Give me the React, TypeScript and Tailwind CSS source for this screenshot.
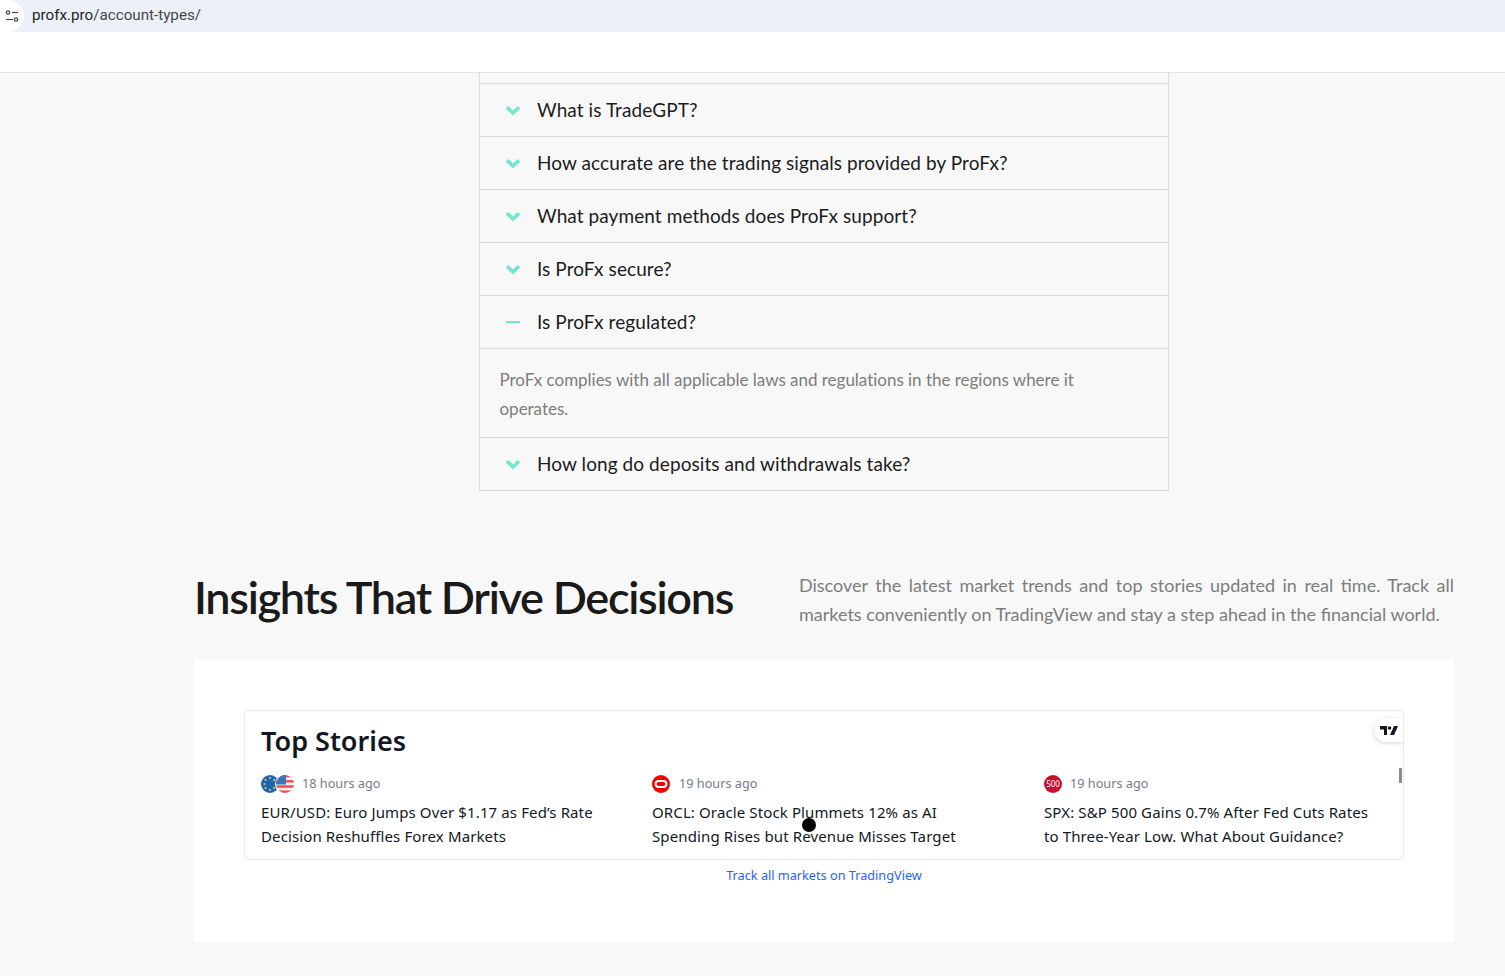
import React from "react";

const Chevron = () => (
  <svg width="16" height="11" viewBox="0 0 16 11" className="block">
    <path d="M2 2.2 L8 8 L14 2.2" fill="none" stroke="#6fe8cb" strokeWidth="3.6" />
  </svg>
);

const Row = ({ q, open }: { q: string; open?: boolean }) => (
  <div className="h-[53px] border-b border-[#d9dbe3] flex items-center pl-[25px]">
    <div className="w-[32px] flex items-center">
      {open ? <div className="w-[14px] h-[2px] bg-[#6fe8cb] ml-[1px]" /> : <Chevron />}
    </div>
    <span className="text-[19px] text-[#1c1c1c] tracking-[0.08px]">{q}</span>
  </div>
);

const Story = ({ icon, time, lines, gap, width }: { icon: React.ReactNode; time: string; lines: string[]; gap: string; width: string }) => (
  <div className={`${width} shrink-0`}>
    <div className="flex items-center h-[18px]">
      {icon}
      <span className={`${gap} text-[12.7px] text-[#787b86]`}>{time}</span>
    </div>
    <div className="mt-[7px] text-[15px] leading-[24px] text-[#131722] whitespace-nowrap tracking-[0.12px]">
      {lines.map((l) => (
        <div key={l}>{l}</div>
      ))}
    </div>
  </div>
);

const FlagIcons = () => (
  <svg width="34" height="18" viewBox="0 0 34 18">
    <circle cx="9" cy="9" r="9" fill="#1e64b4" />
    <g fill="#f2cf45">
      <circle cx="9" cy="3" r="1" />
      <circle cx="4.5" cy="5" r="1" />
      <circle cx="13" cy="5" r="1" />
      <circle cx="3.5" cy="9" r="1" />
      <circle cx="4.5" cy="13" r="1" />
      <circle cx="9" cy="15" r="1" />
      <circle cx="13" cy="13" r="1" />
    </g>
    <circle cx="24" cy="9" r="10" fill="#fff" />
    <clipPath id="us">
      <circle cx="24" cy="9" r="9" />
    </clipPath>
    <g clipPath="url(#us)">
      <rect x="15" y="0" width="18" height="18" fill="#f5f5f5" />
      <rect x="15" y="0" width="18" height="2.4" fill="#ef5350" />
      <rect x="15" y="5" width="18" height="2.6" fill="#ef5350" />
      <rect x="15" y="10.2" width="18" height="2.6" fill="#ef5350" />
      <rect x="15" y="15.4" width="18" height="2.6" fill="#ef5350" />
      <rect x="15" y="0" width="10" height="9.5" fill="#3d72c4" />
    </g>
  </svg>
);

const OracleIcon = () => (
  <svg width="18" height="18" viewBox="0 0 18 18">
    <circle cx="9" cy="9" r="9" fill="#f00000" />
    <rect x="3.6" y="6" width="10.8" height="6" rx="3" fill="none" stroke="#fff" strokeWidth="2" />
  </svg>
);

const SpxIcon = () => (
  <div className="w-[18px] h-[18px] rounded-full bg-[#c8102e] flex items-center justify-center text-white text-[8px] leading-none">
    500
  </div>
);

export default function App() {
  return (
    <div className="relative w-[1505px] h-[976px] overflow-hidden bg-[#f8f8f8] font-['Lato',sans-serif]">
      {/* browser address bar */}
      <div className="h-[32px] bg-[#ebf0f9] flex items-center">
        <div className="w-[24px] h-[32px] bg-white rounded-r-full rounded-bl-[12px] flex items-center justify-center">
          <svg width="16" height="14" viewBox="0 0 16 14" fill="none" stroke="#474747" strokeWidth="1.2">
            <circle cx="4" cy="3.5" r="1.7" />
            <path d="M8 3.5 H14" />
            <path d="M2 10.5 H9" />
            <circle cx="12" cy="10.5" r="1.7" />
          </svg>
        </div>
        <div className="ml-[8px] text-[15.2px] leading-[30px] h-[32px] font-['Roboto',sans-serif]">
          <span className="text-[#1f1f1f]">profx.pro</span>
          <span className="text-[#474747]">/account-types/</span>
        </div>
      </div>
      <div className="h-[41px] bg-white border-b border-[#e3e3e3]" />

      {/* accordion */}
      <div className="ml-[479px] w-[690px] border-x border-b border-[#d9dbe3]">
        <div className="h-[11px] border-b border-[#d9dbe3]" />
        <Row q="What is TradeGPT?" />
        <Row q="How accurate are the trading signals provided by ProFx?" />
        <Row q="What payment methods does ProFx support?" />
        <Row q="Is ProFx secure?" />
        <Row q="Is ProFx regulated?" open />
        <div className="h-[89px] border-b border-[#d9dbe3] pl-[19.5px] pr-[90px] pt-[16px] text-[17px] leading-[29px] text-[#7d7d7d] tracking-[-0.02px]">
          ProFx complies with all applicable laws and regulations in the regions where it operates.
        </div>
        <div className="h-[52px] flex items-center pl-[25px]">
          <div className="w-[32px] flex items-center">
            <Chevron />
          </div>
          <span className="text-[19px] text-[#1c1c1c] tracking-[0.08px]">How long do deposits and withdrawals take?</span>
        </div>
      </div>

      {/* insights heading */}
      <div className="ml-[194px] w-[1260px] mt-[69px] flex justify-between items-start">
        <h2 className="text-[45px] leading-[74px] font-semibold text-[#1a1a1a] tracking-[-1.28px] whitespace-nowrap">
          Insights That Drive Decisions
        </h2>
        <div className="w-[655px] mt-[11px] text-[18px] leading-[29px] text-[#7d7d7d] whitespace-nowrap">
          <div className="[text-align-last:justify]">Discover the latest market trends and top stories updated in real time. Track all</div>
          <div>markets conveniently on TradingView and stay a step ahead in the financial world.</div>
        </div>
      </div>

      {/* panel */}
      <div className="ml-[194px] w-[1260px] h-[282px] mt-[26px] bg-white p-[50px] font-['Noto_Sans',sans-serif]">
        <div className="relative h-[150px] w-[1160px] border border-[#e9e9ea] rounded-[4px] pl-[16px] overflow-hidden">
          <div className="text-[27px] leading-[36px] font-semibold text-[#131722] mt-[12px]">Top Stories</div>
          <div className="flex mt-[16px]">
            <Story width="w-[391px]" icon={<FlagIcons />} gap="ml-[7px]" time="18 hours ago" lines={["EUR/USD: Euro Jumps Over $1.17 as Fed’s Rate", "Decision Reshuffles Forex Markets"]} />
            <Story width="w-[392px]" icon={<OracleIcon />} gap="ml-[9px]" time="19 hours ago" lines={["ORCL: Oracle Stock Plummets 12% as AI", "Spending Rises but Revenue Misses Target"]} />
            <Story width="w-[340px]" icon={<SpxIcon />} gap="ml-[8px]" time="19 hours ago" lines={["SPX: S&P 500 Gains 0.7% After Fed Cuts Rates", "to Three-Year Low. What About Guidance?"]} />
          </div>
          {/* TradingView badge */}
          <div className="absolute right-0 top-[7px] w-[29px] h-[24px] bg-white rounded-l-[12px] shadow-[0_1px_4px_rgba(0,0,0,0.18)] flex items-center justify-center pl-[1px]">
            <svg width="18" height="9" viewBox="0 0 36 18" fill="#131722">
              <path d="M14 18H8V7H0V0h14v18z" />
              <circle cx="19" cy="4" r="3.6" />
              <path d="M28 0h8l-8 18h-8L28 0z" />
            </svg>
          </div>
          {/* scrollbar thumb */}
          <div className="absolute right-[1px] top-[57px] w-[3px] h-[15px] bg-[#8c8c8c]" />
        </div>
        <div className="text-center text-[12.7px] leading-[16px] mt-[7px] text-[#2962ff]">Track all markets on TradingView</div>
      </div>

      {/* cursor dot */}
      <div className="absolute left-[802px] top-[818px] w-[14px] h-[14px] rounded-full bg-black" />
    </div>
  );
}
